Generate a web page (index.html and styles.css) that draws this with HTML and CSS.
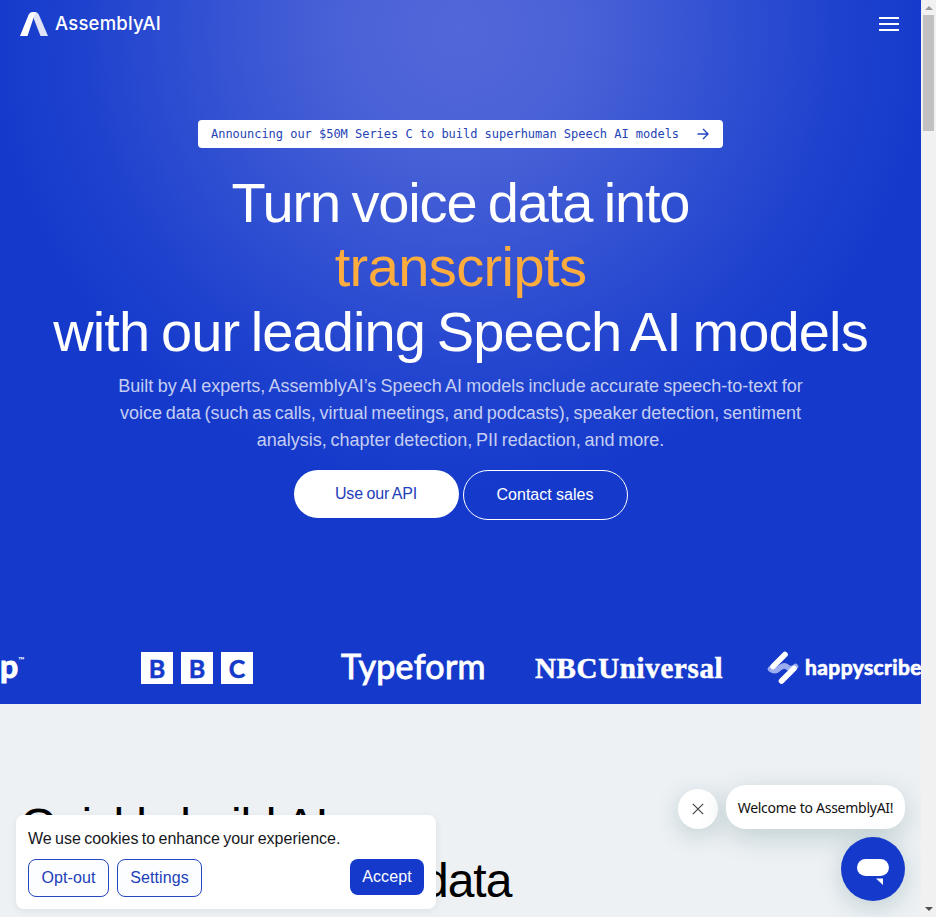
FILE: index.html
```html
<!DOCTYPE html>
<html lang="en">
<head>
<meta charset="utf-8">
<title>AssemblyAI</title>
<link rel="stylesheet" href="styles.css">
</head>
<body>
<main class="page">
  <section class="hero">
    <header class="nav">
      <a class="brand">
        <svg class="brand-mark" width="28" height="24" viewBox="0 0 28 24">
          <path d="M12 0H14.500Q17.700 0 19 3L28 24H20.500L13.500 6Z" fill="#dfe3f5"/>
          <path d="M0 24 8.500 3Q9.800 0 13 0H16Q14.500 2 13.500 6L7.500 24Z" fill="#fff"/>
        </svg>
        <span class="brand-name">AssemblyAI</span>
      </a>
      <div class="burger"><i></i><i></i><i></i></div>
    </header>
    <a class="announce"><span>Announcing our $50M Series C to build superhuman Speech AI models</span>
      <svg width="12" height="12" viewBox="0 0 12 12" fill="none" stroke="#2545c0" stroke-width="1.4"><path d="M.5 6H11M6 1l5 5-5 5"/></svg>
    </a>
    <h1 class="title"><span class="t1">Turn voice data into</span><span class="t2">transcripts</span><span class="t3">with our leading Speech AI models</span></h1>
    <p class="lead"><span class="l1">Built by AI experts, AssemblyAI’s Speech AI models include accurate speech-to-text for</span><span>voice data (such as calls, virtual meetings, and podcasts), speaker detection, sentiment</span><span>analysis, chapter detection, PII redaction, and more.</span></p>
    <div class="actions"><a class="btn solid">Use our API</a><a class="btn outline">Contact sales</a></div>
    <div class="logos">
      <div class="logo-p"><span>p</span><small>™</small></div>
      <div class="logo-bbc"><b>B</b><b>B</b><b>C</b></div>
      <div class="logo-type">Typeform</div>
      <div class="logo-nbc">NBCUniversal</div>
      <div class="logo-happy">
        <svg width="34" height="34" viewBox="0 0 34 34" fill="none" stroke-linecap="round" stroke-width="5.600">
          <path d="M3.500 18Q8 21.500 12 17.500Q17 13 20 16Q24 19.500 28.500 15.500" stroke="#9cadef"/>
          <path d="M6 15.500 18 3.500M14.500 30 27 17.500" stroke="#fff"/>
        </svg>
        <span>happyscribe</span>
      </div>
    </div>
  </section>
  <section class="build">
    <h2><span>Quickly build AI</span><span class="h2b">products with voice data</span></h2>
  </section>
  <div class="cookies">
    <p>We use cookies to enhance your experience.</p>
    <div class="cookie-row"><a class="cbtn w1">Opt-out</a><a class="cbtn w2">Settings</a><a class="cbtn accept">Accept</a></div>
  </div>
  <div class="chat">
    <div class="chat-row">
      <div class="chat-close"><svg width="12" height="12" viewBox="0 0 12 12" stroke="#444" stroke-width="1.2"><path d="M.8.8 11.200 11.200M11.200.8.8 11.200"/></svg></div>
      <div class="chat-msg">Welcome to AssemblyAI!</div>
    </div>
    <div class="chat-fab"><svg width="32" height="27" viewBox="0 0 32 27" fill="#fff"><rect width="32" height="17" rx="8.500"/><path d="M19 19.500H26V26Z"/></svg></div>
  </div>
</main>
<aside class="scroll"><i class="up"></i><i class="thumb"></i><i class="down"></i></aside>
</body>
</html>
```
FILE: styles.css
```css
*{box-sizing:border-box}
body{margin:0;height:917px;overflow:hidden;display:flex;font-family:"Liberation Sans",Arial,sans-serif;background:#edf1f4}
.page{position:relative;width:921px;height:917px;overflow:hidden}
.hero{height:704px;display:flex;flex-direction:column;align-items:center;color:#fff;background:radial-gradient(ellipse 470px 460px at 460px 30px,#5267d9 0,#4a62d7 25%,#3251d2 55%,#1f42ce 80%,#153acb 100%)}
.nav{width:100%;height:48px;padding:0 22px 0 20px;display:flex;justify-content:space-between;align-items:center}
.brand{display:flex;align-items:center;gap:7px}
.brand-name{font:500 18.5px/20px Inter,sans-serif;letter-spacing:.2px;padding-bottom:3px}
.burger{width:20px;display:grid;gap:4px}
.burger i{height:2px;background:#fff}
.announce{margin-top:72px;width:525px;height:28px;border-radius:4px;background:#fff;color:#2444b5;display:flex;align-items:center;justify-content:space-between;padding:0 14px 0 13px;font:12px "DejaVu Sans Mono",monospace;white-space:nowrap}
.announce span{letter-spacing:-.024px}
h1,h2{font-weight:400;margin:0;white-space:nowrap}
h1 span,h2 span,.lead span{display:block}
.title{margin-top:23px;font-size:56px;line-height:64.4px;text-align:center;word-spacing:-3px}
.t1{letter-spacing:-1.15px}
.t2{letter-spacing:-.6px;color:#ffac3e}
.t3{letter-spacing:-.9px}
.lead{margin:9px 0 0;font-size:18px;line-height:27px;text-align:center;color:#c5cef2;white-space:nowrap;word-spacing:-1.3px}
.l1{word-spacing:-.7px}
.actions{margin-top:16px;display:flex;gap:4px}
.btn{width:165px;height:48px;border-radius:25px;font-size:16px;display:flex;align-items:center;justify-content:center}
.solid{background:#fff;color:#1f40b8;letter-spacing:-.15px;word-spacing:-.8px}
.outline{height:50px;border:1px solid #fff}
.logos{width:921px;margin-top:128px;height:40px;display:grid;grid-template:40px/141px 200px 194px 232px 1fr;align-items:center;white-space:nowrap}
.logo-p{display:flex;align-items:flex-start;font:700 32px/36px Lato,sans-serif;padding-bottom:4px;-webkit-text-stroke:1px #fff}
.logo-p small{font-size:8px;line-height:24px;-webkit-text-stroke:0}
.logo-bbc{display:flex;gap:8px}
.logo-bbc b{width:32px;height:32px;background:#fff;color:#153acb;text-align:center;font:700 25px/32px Lato,sans-serif;-webkit-text-stroke:.5px #153acb}
.logo-type{font:400 34px/36px Lato,sans-serif;padding-bottom:5px;-webkit-text-stroke:.9px #fff;letter-spacing:.3px}
.logo-nbc{font:700 29px/40px "Liberation Serif",serif;letter-spacing:.65px;-webkit-text-stroke:.5px #fff}
.logo-happy{display:flex;align-items:center;gap:4px;font:700 21px/34px Lato,sans-serif;letter-spacing:.4px;-webkit-text-stroke:.7px #fff}
.logo-happy span{padding-bottom:3px}
.build{padding:94px 20px 0}
h2{font-size:48px;line-height:55.2px;letter-spacing:-1.3px;color:#000}
.h2b{letter-spacing:-.98px}
.cookies{position:absolute;left:16px;top:815px;width:420px;height:94px;padding:12px;border-radius:8px;background:#fff;box-shadow:0 2px 8px #0001}
.cookies p{margin:0;font-size:16px;line-height:24px;color:#15171c;word-spacing:-1.1px}
.cookie-row{margin-top:8px;display:flex;align-items:flex-start;gap:8px}
.cbtn{height:38px;border:1px solid #2647bd;border-radius:8px;color:#2040b8;font-size:16px;letter-spacing:.1px;display:flex;align-items:center;justify-content:center;background:#fcfdff}
.w1{width:81px}
.w2{width:85px}
.accept{width:74px;height:36px;margin-left:auto;background:#153acb;color:#fff;border:0}
.chat{position:absolute;right:16px;top:785px;width:228px;display:flex;flex-direction:column;align-items:flex-end;gap:8px}
.chat-row{display:flex;gap:8px;align-items:center}
.chat-close{width:40px;height:40px;margin-top:4px;border-radius:50%;background:#fff;display:grid;place-items:center;box-shadow:0 6px 24px #0d4a4a33}
.chat-msg{width:179px;height:44px;border-radius:20px;background:#fff;display:grid;place-items:center;font:14px "Noto Sans",sans-serif;letter-spacing:-.26px;color:#111;box-shadow:0 8px 28px #0d4a4a33}
.chat-fab{width:64px;height:64px;border-radius:50%;background:#153acb;display:grid;place-items:center;padding-top:6px;box-shadow:0 6px 24px #0d4a4a33}
.scroll{width:15px;height:917px;background:#f1f1f1;display:flex;flex-direction:column;align-items:center}
.up{margin-top:6px;border:4px solid transparent;border-top:0;border-bottom:4px solid #999}
.thumb{margin-top:5px;width:11px;height:116px;background:#c1c1c1}
.down{margin:auto 0 6px;border:4px solid transparent;border-bottom:0;border-top:4px solid #505050}
```
